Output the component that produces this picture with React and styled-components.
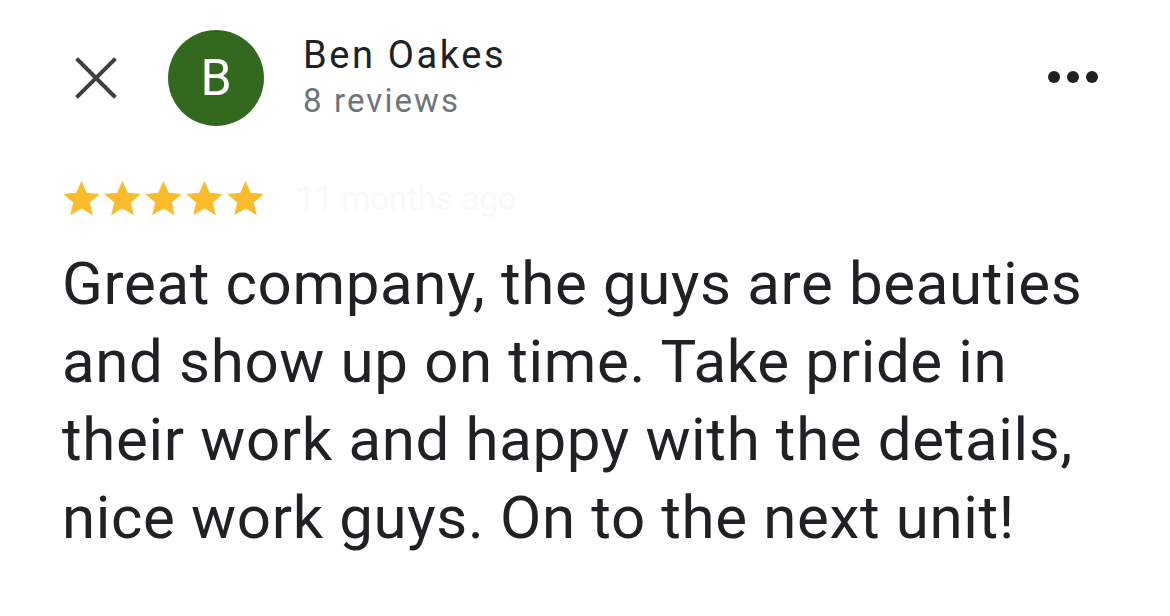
import React from 'react';
import styled, { createGlobalStyle } from 'styled-components';

const GlobalStyle = createGlobalStyle`
  html, body {
    margin: 0;
    padding: 0;
    background: #ffffff;
  }
  body {
    font-family: Roboto, "Noto Sans", Arial, sans-serif;
    color: #202124;
  }
`;

const Page = styled.div`
  width: 1170px;
  height: 616px;
  box-sizing: border-box;
  padding: 30px 72px 0 62px;
  background: #fff;
  overflow: hidden;
`;

const Header = styled.header`
  display: flex;
  align-items: center;
  padding-left: 13px;
`;

const CloseButton = styled.button`
  width: 42px;
  height: 42px;
  padding: 0;
  border: 0;
  background: none;
  display: flex;
  align-items: center;
  justify-content: center;
  margin-right: 51px;
  cursor: pointer;
`;

const Avatar = styled.div`
  width: 96px;
  height: 96px;
  border-radius: 50%;
  background: #33691e;
  color: #fff;
  font-size: 50px;
  display: flex;
  align-items: center;
  justify-content: center;
  flex-shrink: 0;
`;

const Author = styled.div`
  display: flex;
  flex-direction: column;
  margin-left: 39px;
  flex: 1;
  margin-top: 0;
`;

const Name = styled.div`
  font-size: 38px;
  line-height: 46px;
  letter-spacing: 2.6px;
  color: #202124;
`;

const Meta = styled.div`
  font-size: 33px;
  line-height: 46px;
  letter-spacing: 2.1px;
  color: #70757a;
`;

const MoreButton = styled.button`
  display: flex;
  gap: 7px;
  padding: 0;
  border: 0;
  background: none;
  cursor: pointer;
  margin-bottom: 2px;
`;

const Dot = styled.span`
  width: 12px;
  height: 12px;
  border-radius: 50%;
  background: #202124;
`;

const RatingRow = styled.div`
  display: flex;
  align-items: center;
  margin-top: 52px;
  height: 40px;
`;

const Stars = styled.div`
  display: flex;
  margin-left: -1px;
`;

const When = styled.span`
  margin-left: 30px;
  font-size: 33px;
  color: #f9f9f9;
`;

const Body = styled.p`
  margin: 27px 0 0;
  font-size: 60px;
  line-height: 78px;
  letter-spacing: 0.65px;
  color: #202124;
`;

const Star = () => (
  <svg width="41" height="41" viewBox="0 0 24 24">
    <path
      fill="#fbbc2c"
      d="M12 1.6l3.05 7.03 7.62.68-5.78 5.04 1.72 7.45L12 17.85l-6.61 3.95 1.72-7.45L1.33 9.31l7.62-.68z"
    />
  </svg>
);

const lines = [
  'Great company, the guys are beauties',
  'and show up on time. Take pride in',
  'their work and happy with the details,',
  'nice work guys. On to the next unit!',
];

export default function App() {
  return (
    <>
      <GlobalStyle />
      <Page>
        <Header>
          <CloseButton aria-label="Close">
            <svg width="42" height="42" viewBox="0 0 42 42">
              <path
                d="M3 3L39 39M39 3L3 39"
                stroke="#3c4043"
                strokeWidth="4"
                strokeLinecap="square"
              />
            </svg>
          </CloseButton>
          <Avatar>B</Avatar>
          <Author>
            <Name>Ben Oakes</Name>
            <Meta>8 reviews</Meta>
          </Author>
          <MoreButton aria-label="More">
            <Dot />
            <Dot />
            <Dot />
          </MoreButton>
        </Header>
        <RatingRow>
          <Stars>
            {[0, 1, 2, 3, 4].map((i) => (
              <Star key={i} />
            ))}
          </Stars>
          <When>11 months ago</When>
        </RatingRow>
        <Body>
          {lines.map((l, i) => (
            <React.Fragment key={i}>
              {l}
              {i < lines.length - 1 && <br />}
            </React.Fragment>
          ))}
        </Body>
      </Page>
    </>
  );
}
